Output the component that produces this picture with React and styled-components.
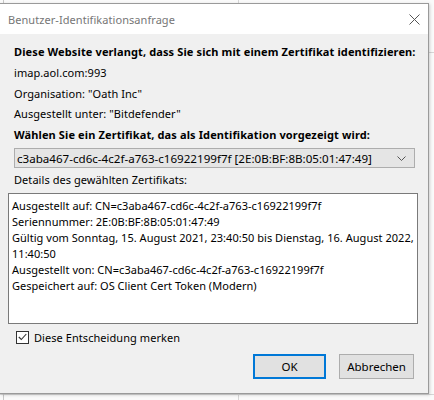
import styled, { createGlobalStyle } from 'styled-components';

const GlobalStyle = createGlobalStyle`
  html, body {
    margin: 0;
    padding: 0;
  }

  body {
    width: 434px;
    height: 400px;
    overflow: hidden;
    font-family: 'Noto Sans', 'Open Sans', sans-serif;
    /* faint window lines behind the dialog */
    background:
      linear-gradient(#c8c8c8, #c8c8c8) 3px 0 / 1px 100% no-repeat,
      linear-gradient(#d6d6d6, #d6d6d6) 238px 0 / 1px 100% no-repeat,
      linear-gradient(#d6d6d6, #d6d6d6) 0 394px / 100% 1px no-repeat,
      linear-gradient(#d6d6d6, #d6d6d6) 428px 52px / 6px 1px no-repeat,
      #fafafa;
  }
`;

const Dialog = styled.div`
  margin-top: 3px;
  width: 428px;
  height: 389px;
  background: #f0f0f0;
  border: 1px solid #9a9a9a;
  border-left: none;
  box-shadow: 1px 1px 3px rgba(0, 0, 0, 0.18);
  display: flex;
  flex-direction: column;
  color: #000;
  font-size: 11px;
  letter-spacing: 0.06px;
`;

const TitleBar = styled.div`
  height: 30px;
  background: #fff;
  display: flex;
  align-items: center;
  justify-content: space-between;
  padding: 0 8px;
`;

const Title = styled.span`
  color: #767676;
  font-size: 11px;
  padding-top: 1px;
`;

const CloseButton = styled.button`
  width: 16px;
  height: 16px;
  border: none;
  background: none;
  padding: 0;
  margin-right: -2px;
  display: flex;
  align-items: center;
  justify-content: center;
`;

const Body = styled.div`
  flex: 1;
  display: flex;
  flex-direction: column;
  padding: 8px 10px 0 8px;
`;

const Line = styled.div`
  padding-left: 6px;
  line-height: ${(p) => p.$h || 20}px;
  font-weight: ${(p) => (p.$bold ? 700 : 400)};
  letter-spacing: ${(p) => (p.$bold ? '0.12px' : 'inherit')};
  white-space: nowrap;
`;

const Select = styled.div`
  margin: 2px 3px 0 6px;
  height: 18px;
  border: 1px solid #adadad;
  background: #e5e5e5;
  display: flex;
  align-items: center;
  justify-content: space-between;
  padding: 0 8px 0 2px;
  font-size: 11.6px;
  letter-spacing: 0;
  white-space: nowrap;
`;

const Details = styled.div`
  margin-top: 1px;
  height: 121px;
  border: 1px solid #7a7a7a;
  background: #fff;
  padding: 4px 0 4px 3px;
  line-height: 16px;
  letter-spacing: 0.03px;
`;

const CheckRow = styled.label`
  margin-top: 6px;
  display: flex;
  align-items: center;
  gap: 5px;
  padding-left: 8px;
  height: 14px;
`;

const Box = styled.span`
  width: 11px;
  height: 11px;
  border: 1px solid #333;
  background: #fff;
  display: flex;
  align-items: center;
  justify-content: center;
`;

const Buttons = styled.div`
  margin-top: 10px;
  display: flex;
  justify-content: flex-end;
  gap: 13px;
  padding-right: 4px;
`;

const Button = styled.button`
  font-family: inherit;
  font-size: 11.5px;
  color: #000;
  width: ${(p) => p.$w}px;
  height: 25px;
  background: #e1e1e1;
  border: ${(p) => (p.$primary ? '2px solid #0078d7' : '1px solid #adadad')};
  padding: 0;
`;

export default function App() {
  return (
    <>
      <GlobalStyle />
      <Dialog>
        <TitleBar>
          <Title>Benutzer-Identifikationsanfrage</Title>
          <CloseButton aria-label="Schließen">
            <svg width="11" height="11" viewBox="0 0 11 11">
              <path d="M0.5 0.5L10.5 10.5M10.5 0.5L0.5 10.5" stroke="#555" strokeWidth="1" />
            </svg>
          </CloseButton>
        </TitleBar>
        <Body>
          <Line $bold>Diese Website verlangt, dass Sie sich mit einem Zertifikat identifizieren:</Line>
          <Line $h={22}>imap.aol.com:993</Line>
          <Line>Organisation: "Oath Inc"</Line>
          <Line>Ausgestellt unter: "Bitdefender"</Line>
          <Line $bold $h={22}>Wählen Sie ein Zertifikat, das als Identifikation vorgezeigt wird:</Line>
          <Select>
            <span>c3aba467-cd6c-4c2f-a763-c16922199f7f [2E:0B:BF:8B:05:01:47:49]</span>
            <svg width="9" height="5" viewBox="0 0 9 5">
              <path d="M0.5 0.5L4.5 4.5L8.5 0.5" fill="none" stroke="#555" strokeWidth="1" />
            </svg>
          </Select>
          <Line $h={24}>Details des gewählten Zertifikats:</Line>
          <Details>
            Ausgestellt auf: CN=c3aba467-cd6c-4c2f-a763-c16922199f7f
            <br />
            Seriennummer: 2E:0B:BF:8B:05:01:47:49
            <br />
            Gültig vom Sonntag, 15. August 2021, 23:40:50 bis Dienstag, 16. August 2022, 11:40:50
            <br />
            Ausgestellt von: CN=c3aba467-cd6c-4c2f-a763-c16922199f7f
            <br />
            Gespeichert auf: OS Client Cert Token (Modern)
          </Details>
          <CheckRow>
            <Box>
              <svg width="9" height="8" viewBox="0 0 9 8">
                <path d="M0.8 4L3.3 6.5L8.3 1" fill="none" stroke="#333" strokeWidth="1.1" />
              </svg>
            </Box>
            Diese Entscheidung merken
          </CheckRow>
          <Buttons>
            <Button $primary $w={73}>OK</Button>
            <Button $w={75}>Abbrechen</Button>
          </Buttons>
        </Body>
      </Dialog>
    </>
  );
}
